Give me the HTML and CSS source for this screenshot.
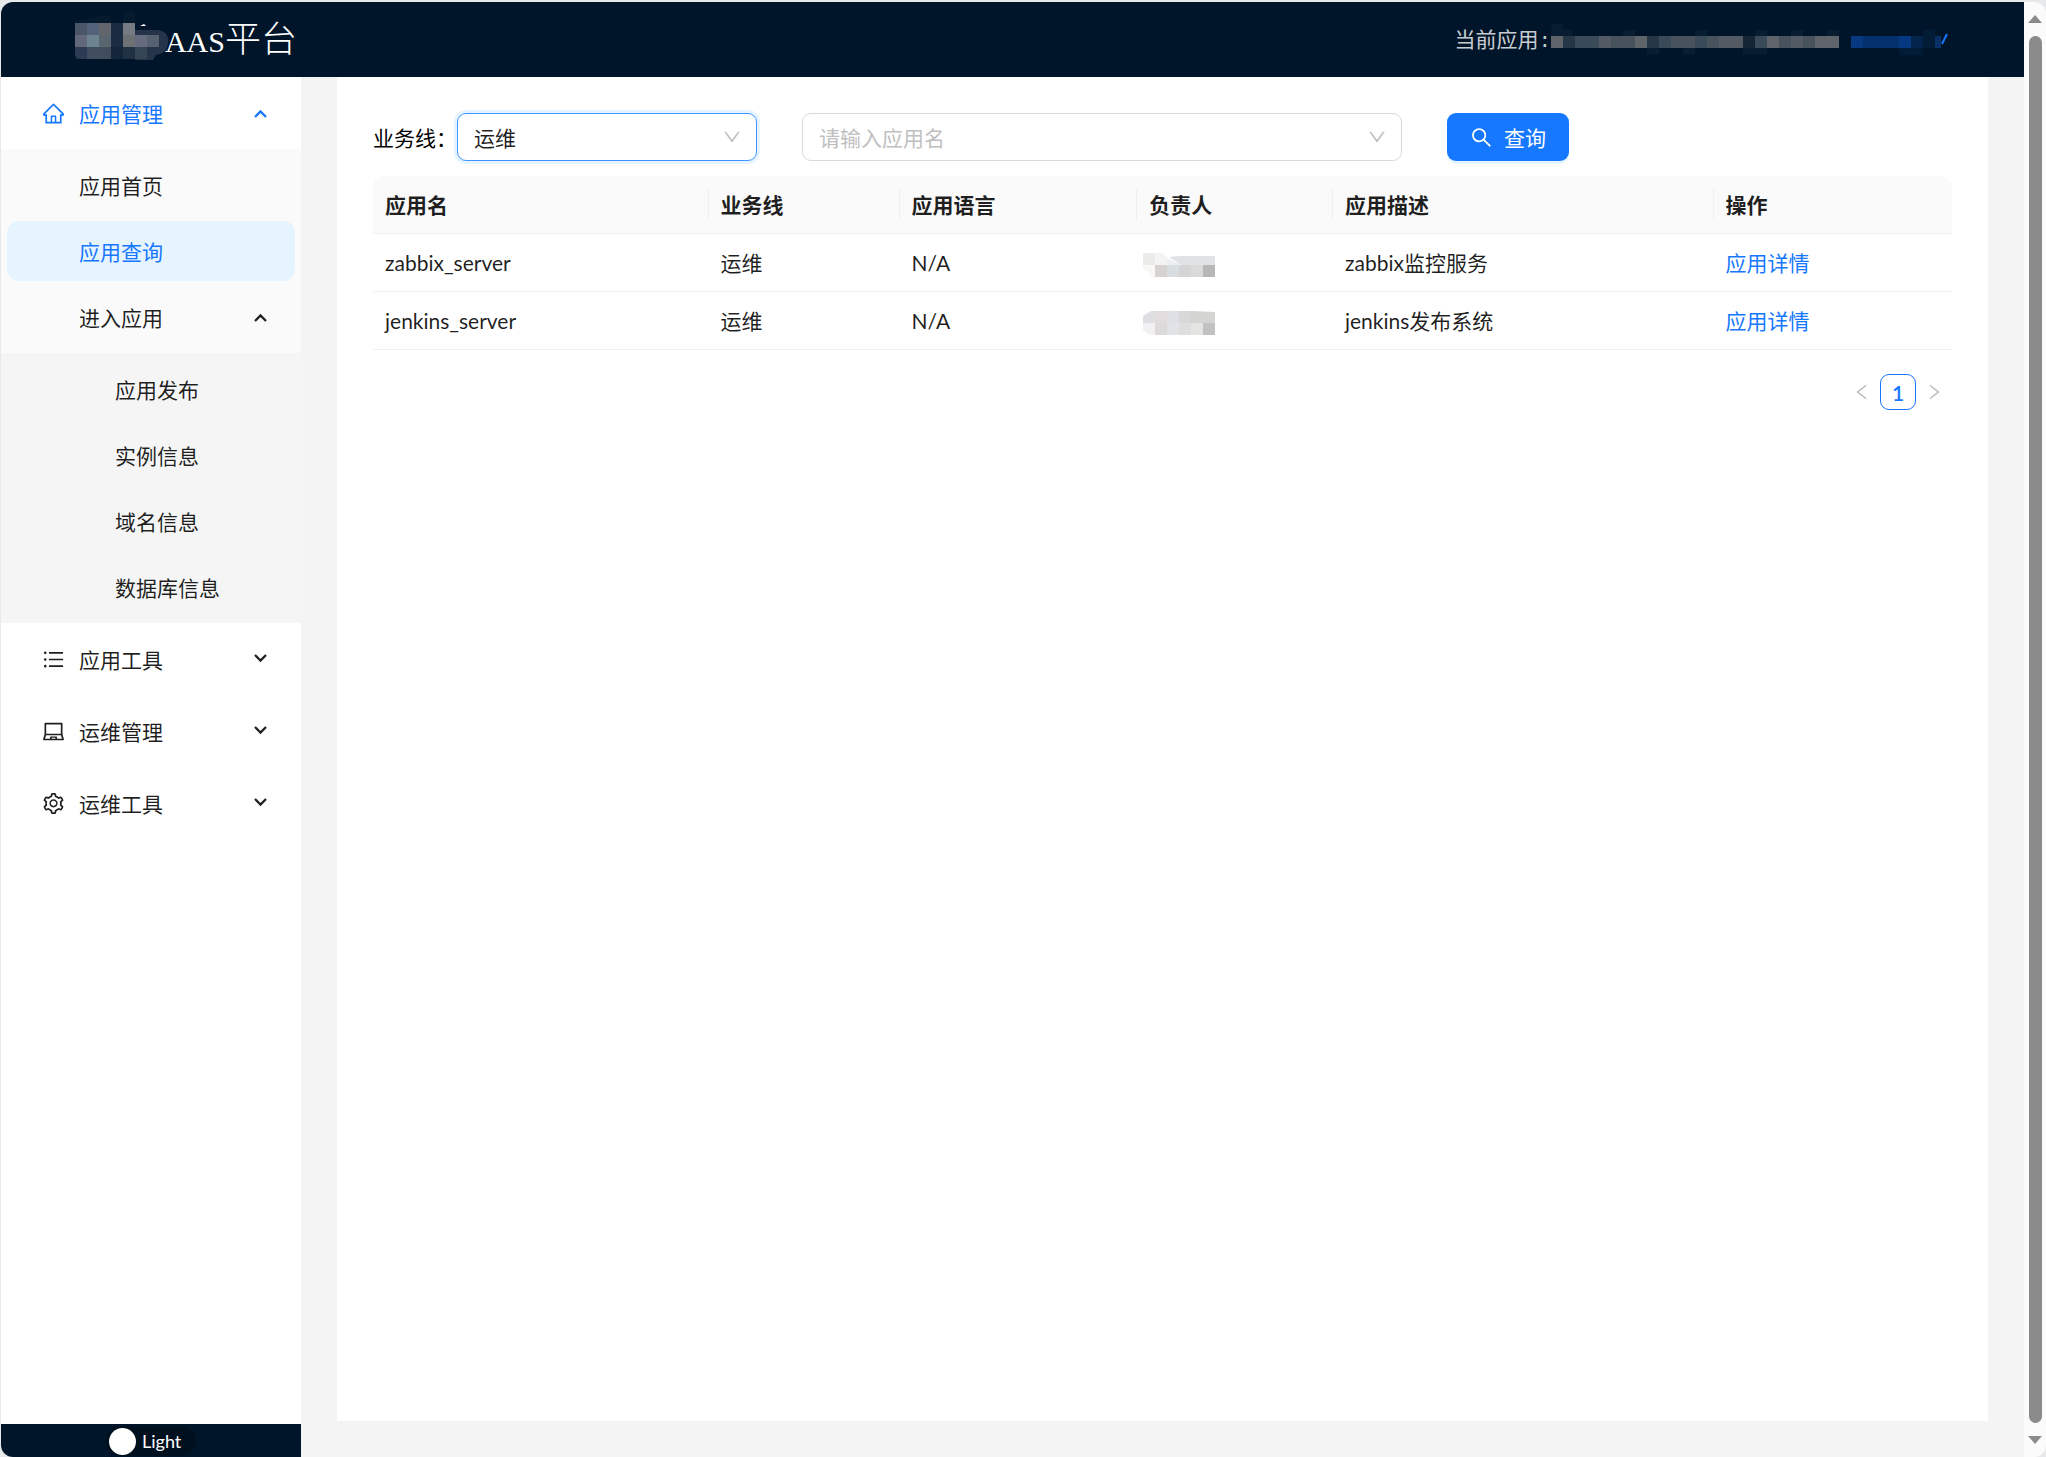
FILE: index.html
```html
<!DOCTYPE html>
<html lang="zh-CN">
<head>
<meta charset="utf-8">
<title>PAAS平台</title>
<link rel="stylesheet" href="styles.css">
</head>
<body>
<svg class="sprite" aria-hidden="true">
  <symbol id="i-home" viewBox="64 64 896 896"><path d="M946.5 505L560.1 118.8l-25.9-25.9a31.5 31.5 0 00-44.4 0L77.5 505a63.9 63.9 0 00-18.8 46c.4 35.2 29.7 63.3 64.9 63.3h42.5V940h691.8V614.3h43.4c17.1 0 33.2-6.7 45.3-18.8a63.6 63.6 0 0018.7-45.3c0-17-6.7-33.1-18.8-45.2zM568 868H456V664h112v204zm217.9-325.7V868H632V640c0-22.1-17.9-40-40-40H432c-22.1 0-40 17.9-40 40v228H238.1V542.3h-96l370-369.7 23.1 23.1L882 542.3h-96.1z"/></symbol>
  <symbol id="i-search" viewBox="64 64 896 896"><path d="M909.6 854.5L649.9 594.8C690.2 542.7 712 479 712 412c0-80.2-31.3-155.4-87.9-212.1-56.6-56.7-132-87.9-212.1-87.9s-155.5 31.3-212.1 87.9C143.2 256.5 112 331.8 112 412c0 80.1 31.3 155.5 87.9 212.1C256.5 680.8 331.8 712 412 712c67 0 130.6-21.8 182.7-62l259.7 259.6a8.2 8.2 0 0011.6 0l43.6-43.5a8.2 8.2 0 000-11.6zM570.4 570.4C528 612.7 471.8 636 412 636s-116-23.3-158.4-65.6C211.3 528 188 471.8 188 412s23.3-116.1 65.6-158.4C296 211.3 352.2 188 412 188s116.1 23.2 158.4 65.6S636 352.2 636 412s-23.3 116.1-65.6 158.4z"/></symbol>
  <symbol id="i-down" viewBox="64 64 896 896"><path d="M884 256h-75c-5.1 0-9.9 2.5-12.9 6.6L512 654.2 227.9 262.6c-3-4.1-7.8-6.6-12.9-6.6h-75c-6.5 0-10.3 7.4-6.5 12.7l352.6 486.1c12.8 17.6 39 17.6 51.7 0l352.6-486.1c3.9-5.3.1-12.7-6.4-12.7z"/></symbol>
  <symbol id="i-laptop" viewBox="64 64 896 896"><path d="M956.9 845.1L896.4 632V168c0-17.7-14.3-32-32-32h-704c-17.7 0-32 14.3-32 32v464L67.9 845.1C60.4 866 75.8 888 98 888h828.8c22.2 0 37.6-22 30.1-42.9zM200.4 208h624v395h-624V208zm228.3 608l8.1-37h150.3l8.1 37H428.7zm240.4 0l-19.1-86.7c-.8-3.7-4.1-6.3-7.8-6.3H382.1c-3.8 0-7 2.6-7.8 6.3L355.2 816H151.7l42.3-149h636.2l42.3 149H669.1z"/></symbol>
  <symbol id="i-list" viewBox="64 64 896 896"><path d="M912 192H328c-4.4 0-8 3.6-8 8v56c0 4.4 3.6 8 8 8h584c4.4 0 8-3.6 8-8v-56c0-4.4-3.6-8-8-8zm0 284H328c-4.4 0-8 3.6-8 8v56c0 4.4 3.6 8 8 8h584c4.4 0 8-3.6 8-8v-56c0-4.4-3.6-8-8-8zm0 284H328c-4.4 0-8 3.6-8 8v56c0 4.4 3.6 8 8 8h584c4.4 0 8-3.6 8-8v-56c0-4.4-3.6-8-8-8zM104 228a56 56 0 10112 0 56 56 0 10-112 0zm0 284a56 56 0 10112 0 56 56 0 10-112 0zm0 284a56 56 0 10112 0 56 56 0 10-112 0z"/></symbol>
  <symbol id="i-setting" viewBox="64 64 896 896"><path d="M924.8 625.7l-65.5-56c3.1-19 4.7-38.4 4.7-57.8s-1.6-38.8-4.7-57.8l65.5-56a32.03 32.03 0 009.3-35.2l-.9-2.6a443.74 443.74 0 00-79.7-137.9l-1.8-2.1a32.12 32.12 0 00-35.1-9.5l-81.3 28.9c-30-24.6-63.5-44-99.7-57.6l-15.7-85a32.05 32.05 0 00-25.8-25.7l-2.7-.5c-52.1-9.4-106.9-9.4-159 0l-2.7.5a32.05 32.05 0 00-25.8 25.7l-15.8 85.4a351.86 351.86 0 00-99 57.4l-81.9-29.1a32 32 0 00-35.1 9.5l-1.8 2.1a446.02 446.02 0 00-79.7 137.9l-.9 2.6c-4.5 12.5-.8 26.5 9.3 35.2l66.3 56.6c-3.1 18.8-4.6 38-4.6 57.1 0 19.2 1.5 38.4 4.6 57.1L99 625.5a32.03 32.03 0 00-9.3 35.2l.9 2.6c18.1 50.4 44.9 96.9 79.7 137.9l1.8 2.1a32.12 32.12 0 0035.1 9.5l81.9-29.1c29.8 24.5 63.1 43.9 99 57.4l15.8 85.4a32.05 32.05 0 0025.8 25.7l2.7.5a449.4 449.4 0 00159 0l2.7-.5a32.05 32.05 0 0025.8-25.7l15.7-85a350 350 0 0099.7-57.6l81.3 28.9a32 32 0 0035.1-9.5l1.8-2.1c34.8-41.1 61.6-87.5 79.7-137.9l.9-2.6c4.5-12.3.8-26.3-9.3-35zM788.3 465.9c2.5 15.1 3.8 30.6 3.8 46.1s-1.3 31-3.8 46.1l-6.6 40.1 74.7 63.9a370.03 370.03 0 01-42.6 73.6L721 702.8l-31.4 25.8c-23.9 19.6-50.5 35-79.3 45.8l-38.1 14.3-17.9 97a377.5 377.5 0 01-85 0l-17.9-97.2-37.8-14.5c-28.5-10.8-55-26.2-78.7-45.7l-31.4-25.9-93.4 33.2c-17-22.9-31.2-47.6-42.6-73.6l75.5-64.5-6.5-40c-2.4-14.9-3.7-30.3-3.7-45.5 0-15.3 1.2-30.6 3.7-45.5l6.5-40-75.5-64.5c11.3-26.1 25.6-50.7 42.6-73.6l93.4 33.2 31.4-25.9c23.7-19.5 50.2-34.9 78.7-45.7l37.9-14.3 17.9-97.2c28.1-3.2 56.8-3.2 85 0l17.9 97 38.1 14.3c28.7 10.8 55.4 26.2 79.3 45.8l31.4 25.8 92.8-32.9c17 22.9 31.2 47.6 42.6 73.6L781.8 426l6.5 39.9zM512 326c-97.2 0-176 78.8-176 176s78.8 176 176 176 176-78.8 176-176-78.8-176-176-176zm79.2 255.2A111.6 111.6 0 01512 614c-29.9 0-58-11.7-79.2-32.8A111.6 111.6 0 01400 502c0-29.9 11.7-58 32.8-79.2C454 401.6 482.1 390 512 390c29.9 0 58 11.6 79.2 32.8A111.6 111.6 0 01624 502c0 29.9-11.7 58-32.8 79.2z"/></symbol>
  <symbol id="i-left" viewBox="64 64 896 896"><path d="M724 218.3V141c0-6.7-7.7-10.4-12.9-6.3L260.3 486.8a31.86 31.86 0 000 50.3l450.8 352.1c5.3 4.1 12.9.4 12.9-6.3v-77.3c0-4.9-2.3-9.6-6.1-12.6l-360-281 360-281.1c3.8-3 6.1-7.7 6.1-12.6z"/></symbol>
  <symbol id="i-right" viewBox="64 64 896 896"><path d="M765.7 486.8L314.9 134.7A7.97 7.97 0 00302 141v77.3c0 4.9 2.3 9.6 6.1 12.6l360 281.1-360 281.1c-3.9 3-6.1 7.7-6.1 12.6V883c0 6.7 7.7 10.4 12.9 6.3l450.8-352.1a31.96 31.96 0 000-50.4z"/></symbol>
  <symbol id="i-open" viewBox="0 0 15 12"><path d="M2 10L7.500 4.500L13 10" fill="none" stroke="currentColor" stroke-width="2.300"/></symbol>
  <symbol id="i-closed" viewBox="0 0 15 12"><path d="M2 2L7.500 7.500L13 2" fill="none" stroke="currentColor" stroke-width="2.300"/></symbol>
</svg>

<div class="window">
  <div class="app">
    <header class="topbar">
      <h1 class="brand">
        <span class="brand-latin">PAAS</span>平台
        <svg class="brand-mask" viewBox="0 0 96 54" aria-hidden="true">
          <path fill="#061a2e" d="M0 12L0 9L36 4V12zM48 12V2q0-2 2-2h8q2 0 2 2V12z"/>
          <path fill="#0e2337" d="M0 12H60V48H0z"/>
          <path fill="#253448" d="M60 19H84q10 2 9 12q0 11-12 13L78 49H60z"/>
          <path fill="#4a5568" d="M0 12h12v12H0z"/><path fill="#53627a" d="M12 12h12v12H12z"/><path fill="#64646c" d="M24 12h12v12H24z"/><path fill="#1a2c41" d="M36 12h12v24H36z"/><path fill="#767b83" d="M48 12h12v12H48z"/>
          <path fill="#626879" d="M0 24h12v12H0z"/><path fill="#6e8390" d="M12 24h12v12H12z"/><path fill="#596670" d="M24 24h12v12H24z"/><path fill="#6d7075" d="M48 24h12v12H48z"/><path fill="#666b80" d="M60 24h12v12H60z"/><path fill="#566270" d="M72 24h12v12H72z"/>
          <path fill="#2d3a53" d="M0 36h12v12H3L0 44z"/><path fill="#3f4d5f" d="M12 36h12v12H12z"/><path fill="#414d5c" d="M24 36h12v12H24z"/><path fill="#13263a" d="M36 36h12v12H36z"/><path fill="#213144" d="M48 36h12v12H48z"/><path fill="#344553" d="M60 36h12v12H60z"/>
          <path fill="#fff" d="M65 15L69 13L71 15z"/>
        </svg>
      </h1>
      <div class="current">
        <span>当前应用<span class="colon">:</span></span>
        <svg class="current-mask" viewBox="0 0 288 32" aria-label="应用名称" role="img">
          <path fill="#081d31" d="M0 12V5q0-5 6-5h6v5h9v7zM72 6h12v6H72zM144 6h12v6h-12zM204 6h12v6h-12zM240 6h12v6h-12zM276 6h12v6h-12zM96 24h12v6H96zM132 24h12v6h-12zM192 24h24v6h-24z"/>
          <path fill="#48525d" d="M0 12H288V24H0z"/>
          <path fill="#253747" d="M12 12h12v12H12zM96 12h12v12H96z"/>
          <path fill="#394b59" d="M24 12h24v12H24zM108 12h12v12h-12zM144 12h12v12h-12zM204 12h12v12h-12z"/>
          <path fill="#5e6469" d="M0 12h12v12H0zM84 12h12v12H84zM216 12h12v12h-12zM264 12h24v12h-24z"/>
          <path fill="#545a63" d="M48 12h12v12H48zM168 12h24v12h-24zM240 12h12v12h-12z"/>
          <path fill="#142635" d="M192 12h12v12h-12z"/>
        </svg>
        <a class="current-link" href="#" aria-label="切换应用">
          <svg viewBox="0 0 98 32" aria-hidden="true">
            <path fill="#06397f" d="M0 12h12v12H0zM48 12h12v12H48z"/><path fill="#05306e" d="M12 12h36v12H12z"/><path fill="#03244c" d="M60 12h12v12H60z"/><path fill="#021b36" d="M48 24h24v7H48zM72 6h12v18H72z"/><path fill="#063066" d="M84 12h6v12h-6z"/><path d="M91 20L96 10" stroke="#1677ff" stroke-width="2"/>
          </svg>
        </a>
      </div>
    </header>

    <div class="body">
      <aside class="sidebar">
        <nav class="menu" aria-label="主菜单">
          <a class="item item-active" href="#"><svg class="icon"><use href="#i-home"/></svg><span class="item-text">应用管理</span><svg class="chevron"><use href="#i-open"/></svg></a>
          <div class="sub">
            <a class="item item-nested" href="#"><span class="item-text">应用首页</span></a>
            <a class="item item-nested item-selected" href="#" aria-current="page"><span class="item-text">应用查询</span></a>
            <a class="item item-nested" href="#"><span class="item-text">进入应用</span><svg class="chevron"><use href="#i-open"/></svg></a>
            <div class="sub sub-deep">
              <a class="item item-deep" href="#"><span class="item-text">应用发布</span></a>
              <a class="item item-deep" href="#"><span class="item-text">实例信息</span></a>
              <a class="item item-deep" href="#"><span class="item-text">域名信息</span></a>
              <a class="item item-deep" href="#"><span class="item-text">数据库信息</span></a>
            </div>
          </div>
          <a class="item" href="#"><svg class="icon"><use href="#i-list"/></svg><span class="item-text">应用工具</span><svg class="chevron"><use href="#i-closed"/></svg></a>
          <a class="item" href="#"><svg class="icon"><use href="#i-laptop"/></svg><span class="item-text">运维管理</span><svg class="chevron"><use href="#i-closed"/></svg></a>
          <a class="item" href="#"><svg class="icon"><use href="#i-setting"/></svg><span class="item-text">运维工具</span><svg class="chevron"><use href="#i-closed"/></svg></a>
        </nav>
        <div class="theme">
          <button class="switch" type="button" role="switch" aria-checked="false"><span class="knob"></span>Light</button>
        </div>
      </aside>

      <main class="content">
        <form class="filters">
          <div class="field">
            <label for="line">业务线：</label>
            <div class="picker picker-focus">
              <select id="line"><option>运维</option></select>
              <svg class="arrow" aria-hidden="true"><use href="#i-down"/></svg>
            </div>
          </div>
          <div class="picker picker-wide">
            <select class="empty" aria-label="应用名"><option>请输入应用名</option></select>
            <svg class="arrow" aria-hidden="true"><use href="#i-down"/></svg>
          </div>
          <button class="search" type="button"><svg class="icon"><use href="#i-search"/></svg>查询</button>
        </form>

        <table class="grid">
          <colgroup><col class="c-name"><col class="c-line"><col class="c-lang"><col class="c-owner"><col class="c-desc"><col class="c-op"></colgroup>
          <thead>
            <tr><th><span>应用名</span></th><th><span>业务线</span></th><th><span>应用语言</span></th><th><span>负责人</span></th><th><span>应用描述</span></th><th><span>操作</span></th></tr>
          </thead>
          <tbody>
            <tr>
              <td>zabbix_server</td><td>运维</td><td>N/A</td>
              <td class="owner"><svg class="owner-mask" viewBox="0 0 72 24" role="img" aria-label="负责人"><path fill="#ebebe9" d="M0 0h12v12H0z"/><path fill="#f5f3f4" d="M12 0h7l5 4v8H12z"/><path fill="#ebeff1" d="M24 5l12 6v1H24z"/><path fill="#e1e2e3" d="M26 4l10-1h36v9H38z"/><path fill="#f7f7f5" d="M0 12h12v12H8l-2-4-6-4z"/><path fill="#d5d2cf" d="M12 12h12v12H12z"/><path fill="#d9dfe1" d="M24 12h12v12H24z"/><path fill="#d5d5d6" d="M36 12h12v12H36z"/><path fill="#dadada" d="M48 12h12v12H48z"/><path fill="#b7b7b6" d="M60 12h12v12H60z"/></svg></td>
              <td>zabbix监控服务</td><td><a href="#">应用详情</a></td>
            </tr>
            <tr>
              <td>jenkins_server</td><td>运维</td><td>N/A</td>
              <td class="owner"><svg class="owner-mask" viewBox="0 0 72 24" role="img" aria-label="负责人"><path fill="#dfdee0" d="M0 12V5L8 0h4v12z"/><path fill="#e3dcdf" d="M12 0h12v12H12z"/><path fill="#dfe0e5" d="M24 0h12v12H24z"/><path fill="#d8d8d8" d="M36 0h12v12H36z"/><path fill="#d4d4d3" d="M48 0l24 1v11H48z"/><path fill="#f2f0f2" d="M0 12h12v12H6l-6-5z"/><path fill="#dbdad9" d="M12 12h12v12H12z"/><path fill="#e1e3e6" d="M24 12h12v12H24z"/><path fill="#dedede" d="M36 12h12v12H36z"/><path fill="#e4e4e2" d="M48 12h12v12H48z"/><path fill="#c1c1c1" d="M60 12h12v12H60z"/></svg></td>
              <td>jenkins发布系统</td><td><a href="#">应用详情</a></td>
            </tr>
          </tbody>
        </table>

        <nav class="pager" aria-label="分页">
          <button class="page page-step" type="button" aria-label="上一页" disabled><svg class="step"><use href="#i-left"/></svg></button>
          <button class="page page-current" type="button" aria-current="page">1</button>
          <button class="page page-step" type="button" aria-label="下一页" disabled><svg class="step"><use href="#i-right"/></svg></button>
        </nav>
      </main>
    </div>
  </div>

  <div class="scrollbar" aria-hidden="true">
    <svg class="scroll-arrow" viewBox="0 0 14 8"><path d="M7 0L14 8H0z"/></svg>
    <div class="scroll-thumb"></div>
    <svg class="scroll-arrow" viewBox="0 0 14 8"><path d="M0 0H14L7 8z"/></svg>
  </div>
</div>
</body>
</html>
```
FILE: styles.css
```css
* { box-sizing: border-box; }

body {
  margin: 0;
  background: #e6e8ea;
  color: rgba(0, 0, 0, 0.88);
  font: 21px/33px Lato, "Noto Sans CJK SC", sans-serif;
}

a { color: #1677ff; text-decoration: none; }
button, select { font: inherit; }
svg { fill: currentColor; flex: none; }
.sprite { display: none; }

.window {
  display: flex;
  min-height: 100vh;
  padding: 2px 0 0 1px;
}

.app {
  flex: 1;
  min-width: 0;
  display: flex;
  flex-direction: column;
  overflow: hidden;
  border-radius: 12px 0 0 12px;
  background: #f4f4f4;
}

/* Top bar */
.topbar {
  display: flex;
  align-items: center;
  justify-content: space-between;
  height: 75px;
  padding: 0 75px 0 150px;
  background: #001529;
  color: #fff;
}

.brand {
  position: relative;
  margin: 0;
  font-size: 36px;
  font-weight: 300;
  line-height: 75px;
  white-space: nowrap;
}

.brand-latin { font: 30px/75px "Liberation Serif", serif; }

.brand-mask {
  position: absolute;
  left: -76px;
  top: 10px;
  width: 96px;
  height: 54px;
}

.current {
  display: flex;
  align-items: center;
  color: rgba(255, 255, 255, 0.8);
}

.colon { font-family: "Liberation Mono", monospace; }
.current-mask { width: 288px; height: 32px; margin-right: 12px; }
.current-link svg { display: block; width: 98px; height: 32px; }

/* Sidebar */
.body { flex: 1; display: flex; }

.sidebar {
  flex: none;
  display: flex;
  flex-direction: column;
  width: 300px;
  background: #fff;
}

.menu { flex: 1; padding: 6px 0; }

.item {
  display: flex;
  align-items: center;
  gap: 15px;
  height: 60px;
  margin: 0 6px 12px;
  padding: 0 27px 0 36px;
  border-radius: 12px;
  color: rgba(0, 0, 0, 0.88);
}

.item-active { margin-bottom: 6px; color: #1677ff; }
.item-text { flex: 1; }

.icon { width: 21px; height: 21px; }
.chevron { width: 15px; height: 12px; }

.sub {
  padding-top: 6px;
  margin-bottom: 6px;
  background: #fafafa;
}

.sub .item { margin-bottom: 6px; }
.item-nested { padding-left: 72px; }
.item-deep { padding-left: 108px; }
.item-selected { background: #e6f4ff; color: #1677ff; }
.sub-deep { background: #f5f5f5; display: flow-root; }

.theme {
  display: flex;
  justify-content: center;
  height: 33px;
  padding: 2px 0 1px;
  background: #001529;
}

.switch {
  display: flex;
  align-items: center;
  gap: 6px;
  width: 90px;
  height: 30px;
  padding: 0 3px;
  border: 0;
  border-radius: 15px;
  background: #00101f;
  color: #fff;
  font-size: 18px;
  line-height: 30px;
}

.knob {
  width: 27px;
  height: 27px;
  border-radius: 50%;
  background: #fff;
}

/* Content */
.content {
  flex: 1;
  min-width: 0;
  margin: 0 36px 36px;
  padding: 36px;
  background: #fff;
}

.filters {
  display: flex;
  align-items: center;
  gap: 45px;
  margin-bottom: 15px;
}

.field { display: flex; align-items: center; color: #000; }

.picker {
  position: relative;
  width: 300px;
  height: 48px;
}

.picker-wide { width: 600px; }

.picker select {
  appearance: none;
  width: 100%;
  height: 100%;
  padding: 0 48px 0 16px;
  border: 1px solid #d9d9d9;
  border-radius: 9px;
  outline: 0;
  background: #fff;
  color: rgba(0, 0, 0, 0.88);
}

.picker-focus select {
  border-color: #4096ff;
  box-shadow: 0 0 0 3px #e6f4ff;
}

.picker .empty { color: #bfbfbf; }

.arrow {
  position: absolute;
  right: 16px;
  top: 15px;
  width: 18px;
  height: 18px;
  color: #bfbfbf;
  pointer-events: none;
}

.search {
  display: flex;
  align-items: center;
  gap: 12px;
  height: 48px;
  padding: 0 23px 0 24px;
  border: 0;
  border-radius: 9px;
  background: #1677ff;
  box-shadow: 0 3px 0 #e6f4ff;
  color: #fff;
}

/* Table */
.grid {
  width: 100%;
  table-layout: fixed;
  border-collapse: separate;
  border-spacing: 0;
}

.c-name { width: 21.25%; }
.c-line { width: 12.1%; }
.c-lang { width: 15.05%; }
.c-owner { width: 12.4%; }
.c-desc { width: 24.1%; }
.c-op { width: 15.1%; }

.grid th,
.grid td {
  height: 58px;
  padding: 0 0 0 12px;
  border-bottom: 1px solid #f0f0f0;
  text-align: left;
}

.grid th { background: #fafafa; font-weight: 600; }
.grid th span { display: block; border-right: 1px solid #f0f0f0; }
.grid th:last-child span { border-right: 0; }
.grid th:first-child { border-top-left-radius: 12px; }
.grid th:last-child { border-top-right-radius: 12px; }

.grid .owner { padding-left: 6px; }
.owner-mask { display: block; width: 72px; height: 24px; margin-top: 5px; }

.pager {
  display: flex;
  justify-content: flex-end;
  margin-top: 24px;
}

.page {
  display: grid;
  place-items: center;
  width: 36px;
  height: 36px;
  padding: 0;
  border: 0;
  border-radius: 9px;
  background: #fff;
}

.page-current { border: 1px solid #1677ff; color: #1677ff; font-weight: 600; }
.page-step { color: #bfbfbf; }
.step { width: 18px; height: 18px; }

/* Scrollbar */
.scrollbar {
  display: flex;
  flex-direction: column;
  align-items: center;
  gap: 13px;
  width: 22px;
  padding: 13px 0;
  border-radius: 0 12px 12px 0;
  background: #fbfbfb;
  color: #8b8b8b;
}

.scroll-arrow { width: 14px; height: 8px; }
.scroll-thumb { flex: 1; width: 13px; border-radius: 7px; background: #8b8b8b; }
```
